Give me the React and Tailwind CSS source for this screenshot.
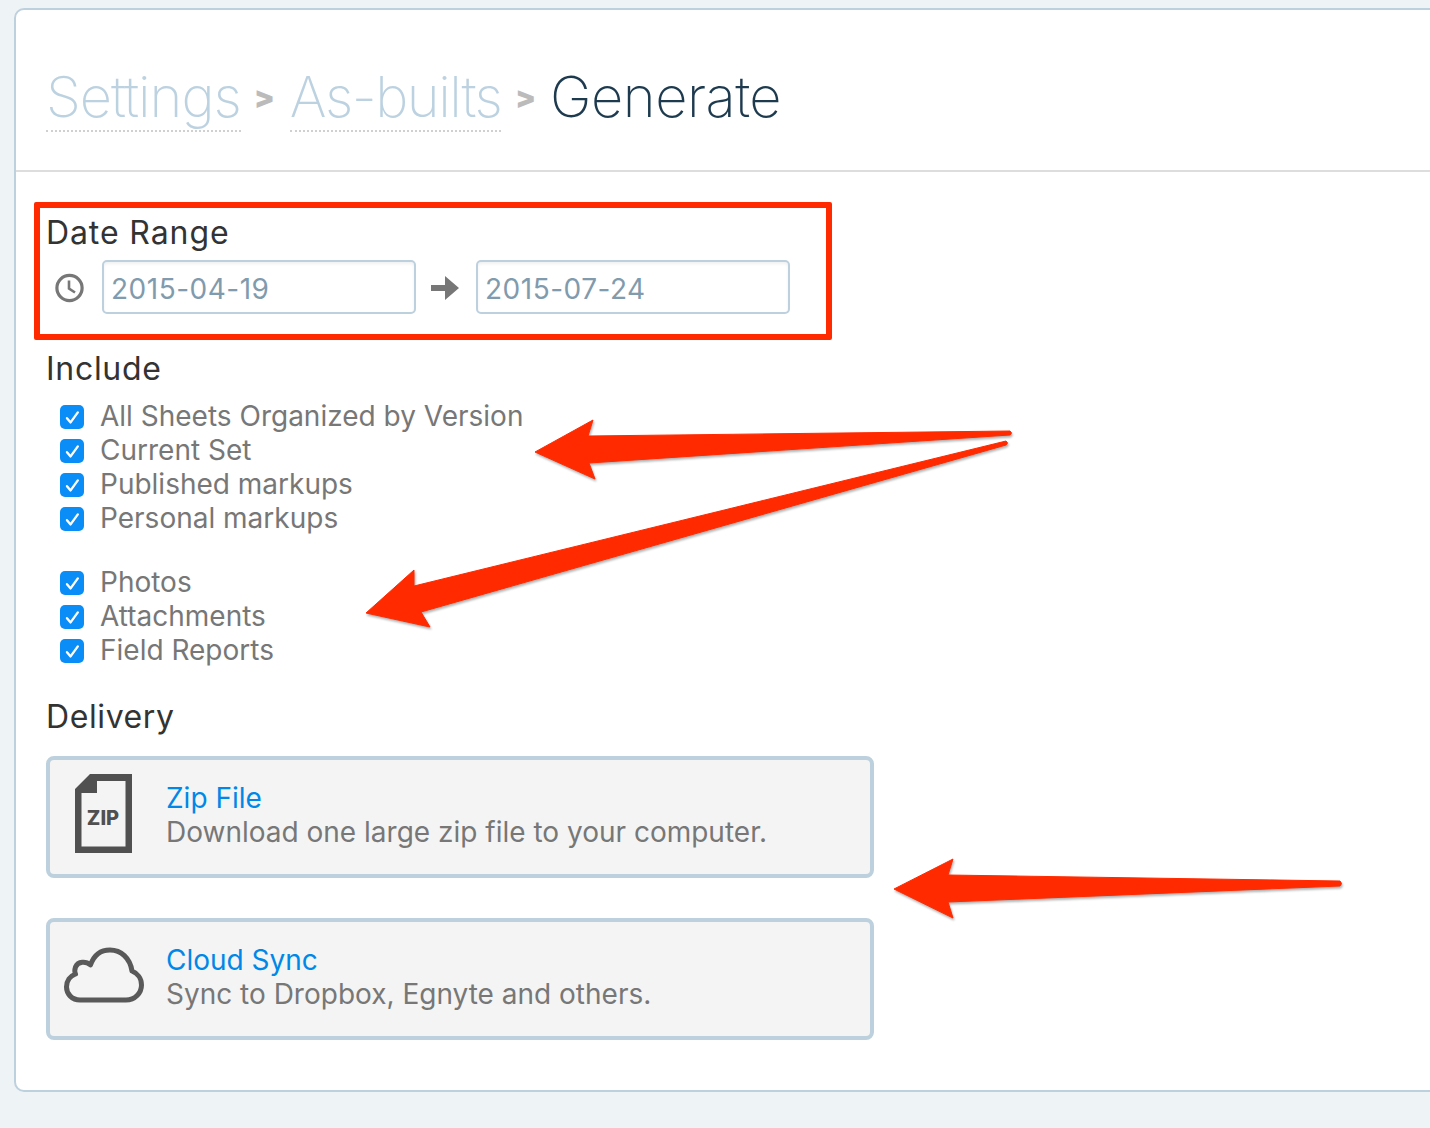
import React from "react";

const FONT = "[font-family:Inter,'Liberation_Sans',sans-serif]";

function Check({ label }) {
  return (
    <div className="flex h-[34px] items-center">
      <div className="ml-[14px] mr-[16px] mt-[2px] flex h-6 w-6 items-center justify-center rounded-[5px] bg-[#0a8df6]">
        <svg width="17" height="17" viewBox="0 0 16 16" fill="none" stroke="#fff" strokeWidth="2.2" strokeLinecap="round" strokeLinejoin="round">
          <path d="M2.8 8.6 L6.2 12.6 L13 3.2" />
        </svg>
      </div>
      <span className="text-[28px] leading-[34px] text-[#777]">{label}</span>
    </div>
  );
}

function DateField({ value }) {
  return (
    <div className="flex h-[54px] w-[314px] items-center rounded-[5px] border-2 border-[#bdd0de] bg-white pl-[7px] pt-[4px] text-[28px] tracking-[0.5px] text-[#7f9bad] shadow-[inset_0_2px_3px_rgba(0,0,0,0.06)]">
      {value}
    </div>
  );
}

function Card({ icon, title, desc, className, iconClass }) {
  return (
    <div className={`flex h-[122px] w-[828px] items-center rounded-[8px] border-4 border-[#bdd0de] bg-[#f4f4f4] ${className || ""}`}>
      <div className={`flex w-[116px] shrink-0 items-center justify-center pr-[8px] ${iconClass}`}>{icon}</div>
      <div className="pb-[4px] text-[28px] leading-[34px]">
        <div className="text-[#0088e8]">{title}</div>
        <div className="text-[#777]">{desc}</div>
      </div>
    </div>
  );
}

function Crumb({ children, className }) {
  return <span className={`border-b-2 border-dotted border-[#d0d0d0] pb-[2px] leading-[62px] text-[#bdd2e1] ${className}`}>{children}</span>;
}

function Sep({ className }) {
  return <span className={`text-[30px] font-black leading-[62px] tracking-normal text-[#bbbbbb] ${className}`}>&gt;</span>;
}

export default function App() {
  return (
    <div className={`relative h-[1128px] w-[1430px] overflow-hidden bg-[#eef3f6] pl-[14px] pt-2 ${FONT}`}>
      <div className="h-[1084px] w-[1500px] rounded-l-[10px] border-2 border-[#bdd0de] bg-white">
        <div className="flex h-[162px] items-start border-b-2 border-[#dddddd] pl-[30px] pt-[56px] text-[56px] font-extralight">
          <Crumb className="tracking-[-1px]">Settings</Crumb>
          <Sep className="ml-[13px] mr-[15px]" />
          <Crumb className="tracking-[-1.5px]">As-builts</Crumb>
          <Sep className="ml-[14px] mr-[14px]" />
          <span className="leading-[62px] tracking-[-0.5px] text-[#1d3a4f]">Generate</span>
        </div>

        <div className="pl-[30px]">
          <h2 className="mt-[41px] text-[32px] font-normal leading-[40px] tracking-[0.9px] text-[#333]">Date Range</h2>
          <div className="mt-[7px] flex items-center">
            <svg className="ml-[8px] mr-[17px]" width="31" height="31" viewBox="0 0 31 31" fill="none" stroke="#777" strokeWidth="3.2">
              <circle cx="15.5" cy="16" r="12.6" />
              <path d="M15 8.5 V16.5 L21 20.5" strokeWidth="2.6" />
            </svg>
            <DateField value="2015-04-19" />
            <svg className="mx-[14px] mt-[2px]" width="32" height="26" viewBox="0 0 32 26" fill="#777">
              <path d="M1 10 H15 V1 L29 13 L15 25 V16 H1 Z" />
            </svg>
            <DateField value="2015-07-24" />
          </div>

          <h2 className="mt-[35px] text-[32px] font-normal leading-[40px] tracking-[0.7px] text-[#333]">Include</h2>
          <div className="mt-[10px]">
            <Check label="All Sheets Organized by Version" />
            <Check label="Current Set" />
            <Check label="Published markups" />
            <Check label="Personal markups" />
          </div>
          <div className="mt-[30px]">
            <Check label="Photos" />
            <Check label="Attachments" />
            <Check label="Field Reports" />
          </div>

          <h2 className="mt-[30px] text-[32px] font-normal leading-[40px] tracking-[0.6px] text-[#333]">Delivery</h2>
          <Card
            className="mt-[19px]"
            iconClass="pb-[6px]"
            title="Zip File"
            desc="Download one large zip file to your computer."
            icon={
              <svg width="60" height="80" viewBox="0 0 60 80">
                <path fillRule="evenodd" fill="#505050" d="M16 0 H58 V79 H1 V15 Z M23 7 V19 H7.5 V72.5 H51.5 V7 Z" />
                <text x="29" y="51" textAnchor="middle" fontSize="20" fontWeight="800" fill="#505050" fontFamily="Inter, 'Liberation Sans', sans-serif">ZIP</text>
              </svg>
            }
          />
          <Card
            className="mt-[40px]"
            iconClass="pb-[8px]"
            title="Cloud Sync"
            desc="Sync to Dropbox, Egnyte and others."
            icon={
              <svg width="82" height="58" viewBox="63 946 82 58" fill="none" stroke="#595959" strokeWidth="5" strokeLinejoin="round">
                <path d="M80 1000 H126 C135 1000 141.5 993 141.5 985 C141.5 978 137 973 132 971 C130 958 121 950 110 950 C101 950 94 955 90.5 965 C86 961 78 961 75.5 967 C74.5 970 74.5 972 75.5 974 C70 976 66.5 981 66.5 987 C66.5 994 72 1000 80 1000 Z" />
              </svg>
            }
          />
        </div>
      </div>

      {/* Annotation layer */}
      <div className="absolute left-[34px] top-[202px] h-[138px] w-[798px] rounded-[2px] border-[6px] border-[#ff2a00]" />
      <svg className="absolute left-0 top-0 drop-shadow-[1px_2px_1px_rgba(0,0,0,0.3)]" width="1430" height="1128" viewBox="0 0 1430 1128" fill="#ff2a00" stroke="#ff2a00" strokeLinejoin="round">
        <path strokeWidth="1" d="M535 452 L593 420 L588 436 L1010 431 Q1013 433 1010 435 L589 463 L595 479 Z" />
        <path strokeWidth="1" d="M366 613 L414 570 L414 586 L1006 441 Q1009 443 1006 445 L421 612 L430 627 Z" />
        <path strokeWidth="1" d="M894 889 L953 859 L948 875 L1340 881 Q1343 883.5 1340 886 L948 902 L953 918 Z" />
      </svg>
    </div>
  );
}
